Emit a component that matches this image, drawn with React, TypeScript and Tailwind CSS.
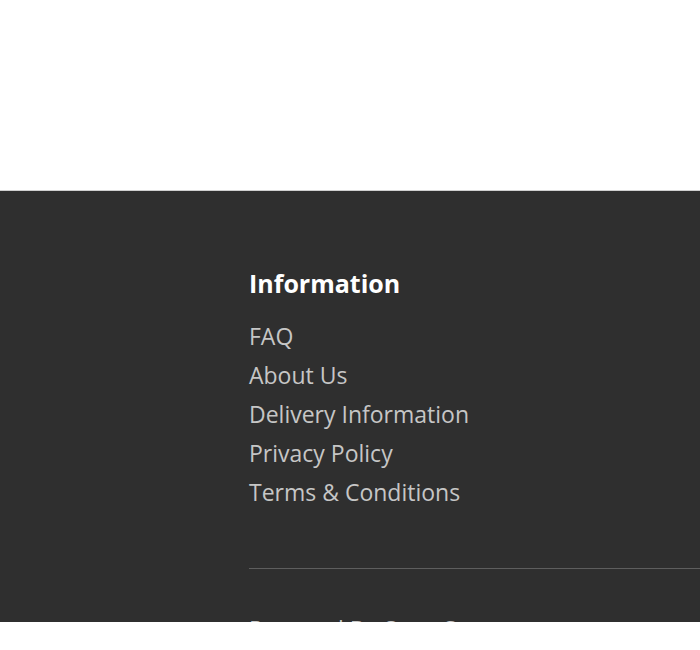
// Pied de page : bloc « Information » sur fond sombre, coupé en bas.

const LINKS = ['FAQ', 'About Us', 'Delivery Information', 'Privacy Policy', 'Terms & Conditions'];

export default function App() {
  return (
    <div className="w-[700px] h-[650px] bg-white overflow-hidden" style={{ fontFamily: '"Open Sans", "Noto Sans", sans-serif' }}>
      <div className="h-[190px]" />
      <footer className="h-[432px] overflow-hidden border-t border-[#cfcfcf] bg-[#2f2f2f] pl-[249px] pt-[77px]">
        <h3 className="text-[25px] leading-[30px] font-bold text-white">Information</h3>
        <ul className="mt-[19px]">
          {LINKS.map((l) => (
            <li key={l} className="text-[23px] leading-[39px] text-[#c6c6c6]">
              <a href="#">{l}</a>
            </li>
          ))}
        </ul>
        <div className="mt-[56px] h-px bg-[#5e5e5e]" />
        <p className="mt-[46px] text-[23px] leading-[28px] text-[#c6c6c6]">Powered By OpenCart</p>
      </footer>
    </div>
  );
}
